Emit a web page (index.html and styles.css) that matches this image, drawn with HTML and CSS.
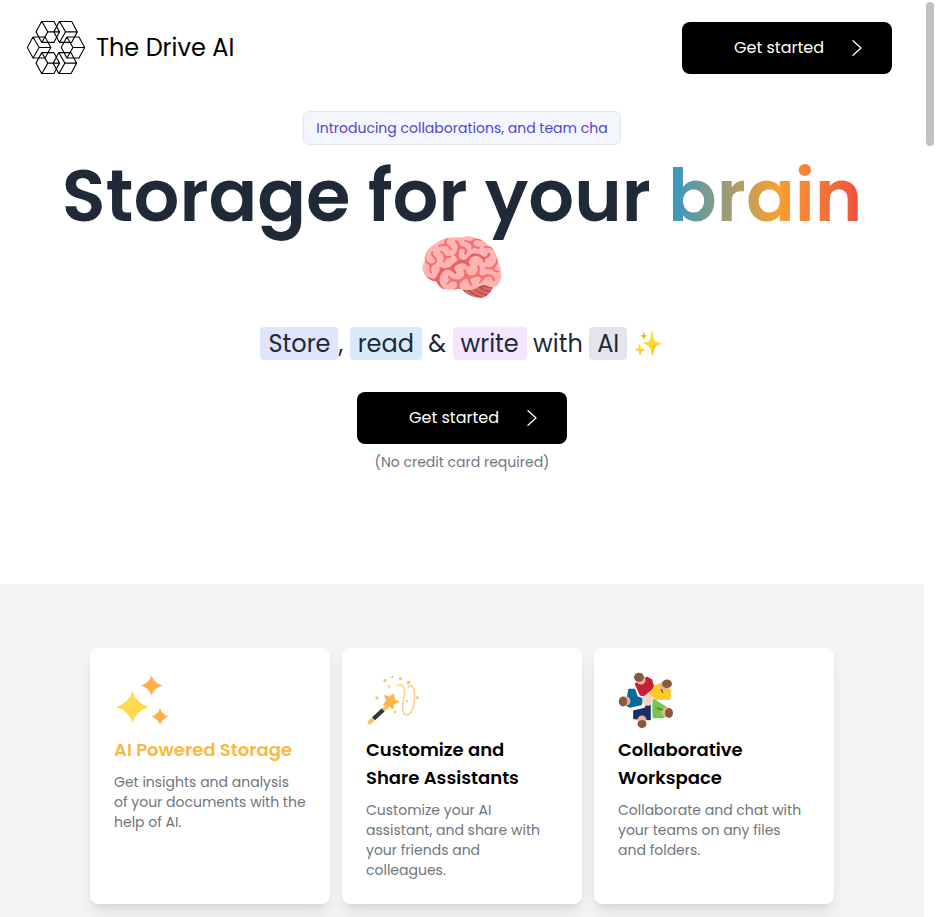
FILE: index.html
```
<!DOCTYPE html>
<html lang="en">
<head>
<meta charset="utf-8">
<title>The Drive AI</title>
<link rel="stylesheet" href="styles.css">
</head>
<body>
<div class="page">
  <header class="header">
    <a class="brand">
      <svg class="logo" width="58" height="53" viewBox="21 19 173 156" preserveAspectRatio="none" fill="none" stroke="#000" stroke-width="3.2" stroke-linejoin="round">
        <defs>
          <path id="cube" d="M-35 0 -18-31H18L35 0 18 31H-18ZM-18-31 0 0H35M0 0-18 31"/>
        </defs>
        <use href="#cube" x="83" y="51"/>
        <use href="#cube" x="136" y="51"/>
        <use href="#cube" x="57" y="97"/>
        <use href="#cube" x="158" y="97"/>
        <use href="#cube" x="83" y="143"/>
        <use href="#cube" x="134" y="143"/>
      </svg>
      <span class="brand-name">The Drive AI</span>
    </a>
    <a class="button">
      <span>Get started</span>
      <svg class="chevron" width="10" height="16" viewBox="0 0 10 16" fill="none" stroke="#fff" stroke-width="1.3" stroke-linecap="round" stroke-linejoin="round"><path d="M1 .8 9 8 1 15.2"/></svg>
    </a>
  </header>

  <main class="hero">
    <div class="announcement">Introducing collaborations, and team cha</div>
    <h1 class="headline">Storage for your <span class="gradient">brain</span> <span class="brain">🧠</span></h1>
    <p class="tagline"><span class="chip indigo">Store</span>, <span class="chip blue">read</span> &amp; <span class="chip purple">write</span> with <span class="chip gray">AI</span> ✨</p>
    <a class="button">
      <span>Get started</span>
      <svg class="chevron" width="10" height="16" viewBox="0 0 10 16" fill="none" stroke="#fff" stroke-width="1.3" stroke-linecap="round" stroke-linejoin="round"><path d="M1 .8 9 8 1 15.2"/></svg>
    </a>
    <p class="note">(No credit card required)</p>
  </main>

  <section class="features">
    <article class="card">
      <svg class="icon" width="56" height="56" viewBox="0 0 56 56">
        <path fill="#ffda50" d="M18.500 19Q22 31 34.500 35Q22 39 18.500 51Q15 39 2 35Q15 31 18.500 19Z"/>
        <path fill="#ffb04a" d="M37.500 3.500Q40 11 48.500 13.500Q40 16 37.500 23.500Q35 16 27 13.500Q35 11 37.500 3.500ZM46 36Q48 42.500 54.500 44.500Q48 46.500 46 53Q44 46.500 37.500 44.500Q44 42.500 46 36Z"/>
      </svg>
      <h2 class="card-title highlight">AI Powered Storage</h2>
      <p class="card-text">Get insights and analysis of your documents with the help of AI.</p>
    </article>
    <article class="card">
      <svg class="icon" width="56" height="56" viewBox="0 0 56 56">
        <path d="M3.500 50.500 26 30" stroke="#fbc25f" stroke-width="4" stroke-linecap="round"/>
        <path d="M7.500 46.800 17 38" stroke="#333639" stroke-width="4.200"/>
        <path fill="#f9b54a" stroke="#f9b54a" stroke-linejoin="round" d="M27.500 22 28.500 27.500 33 30 28 31.800 26.500 37 23 33 17.500 33 20.500 28.500 18.500 23.500 23.500 25Z"/>
        <path fill="none" stroke="#fcd38c" stroke-width="1.600" stroke-linecap="round" d="M31 14C36 10 39 15 38.500 23C36 33 35 43 41 43C47 42 50 27 48 18C47 13 43 12 42 16"/>
        <g fill="#fbc979"><circle cx="19" cy="8.500" r="1.700"/><circle cx="26.500" cy="5" r="1.300"/><circle cx="34.500" cy="6.500" r="1.700"/><circle cx="42.500" cy="10.500" r="1.900"/><circle cx="23" cy="14.500" r="1.200"/><circle cx="11" cy="26" r="1.800"/><circle cx="41" cy="29" r="1.300"/><circle cx="51.500" cy="25.500" r="1.500"/><circle cx="29" cy="40" r="1.400"/></g>
      </svg>
      <h2 class="card-title">Customize and Share Assistants</h2>
      <p class="card-text">Customize your AI assistant, and share with your friends and colleagues.</p>
    </article>
    <article class="card">
      <svg class="icon" width="56" height="56" viewBox="0 0 56 56">
        <g stroke-width="1.600" stroke-linejoin="round">
          <path fill="#c91f37" stroke="#c91f37" d="M17.500 12 29 5.500 33.500 8 35.500 15.500 26 23.500 22.500 23Z"/>
          <path fill="#ffc928" stroke="#ffc928" d="M37 14 44 11.500 52.500 18.500 51.500 27 39 27.300 32 22Z"/>
          <path fill="#76c552" stroke="#76c552" d="M35.500 27.500 48 35.500 51 41 45 45.500 35.500 45.500 35 37Z"/>
          <path fill="#182f66" stroke="#182f66" d="M16 39 27 36.500 29 33 32 33.500 32 47.500 16 46.500Z"/>
          <path fill="#086b99" stroke="#086b99" d="M11 17.500 16.500 17.500 19 25 24.500 27 23 32.500 12 35 8.500 33Z"/>
        </g>
        <path fill="#f6d5c5" d="m25 25 4-3 5 3 1 4-4 5-5-1-2-5Z"/>
        <g fill="#e4b39a"><circle cx="23" cy="8" r="4.500"/><circle cx="46.500" cy="14" r="4.500"/><circle cx="48" cy="40" r="4.500"/><circle cx="24" cy="48" r="4.500"/><circle cx="8" cy="29" r="4.500"/></g>
        <g fill="#8b5a3c"><ellipse cx="21" cy="5.200" rx="5" ry="4.500"/><ellipse cx="49" cy="11.800" rx="5" ry="4.300"/><ellipse cx="51" cy="41" rx="4" ry="5"/><ellipse cx="24" cy="52" rx="4.500" ry="4"/><ellipse cx="5" cy="29.500" rx="4.200" ry="5"/></g>
        <path fill="none" stroke="#6b5520" stroke-width="1.200" d="m43 17 2 4M39 36l6 2"/>
      </svg>
      <h2 class="card-title">Collaborative Workspace</h2>
      <p class="card-text">Collaborate and chat with your teams on any files and folders.</p>
    </article>
  </section>
</div>
<div class="scrollbar"><div class="thumb"></div></div>
</body>
</html>
```
FILE: styles.css
```
* { box-sizing: border-box; }

body {
  display: flex;
  height: 917px;
  margin: 0;
  overflow: hidden;
  background: #fff;
  color: #000;
  font-family: Poppins, Inter, "Noto Color Emoji", sans-serif;
  font-size: 16px;
  line-height: 24px;
}

h1, h2, p { margin: 0; }

.page { width: 924px; flex: none; }

.scrollbar { flex: 1; padding: 2px 2px 0; }
.thumb { width: 8px; height: 144px; border-radius: 4px; background: #c1c1c1; }

.header {
  display: flex;
  align-items: center;
  justify-content: space-between;
  height: 95px;
  padding: 0 32px 0 27px;
}

.brand { display: flex; align-items: center; gap: 11px; }
.logo { display: block; }
.brand-name { font-size: 24px; line-height: 32px; }

.button {
  display: flex;
  align-items: center;
  justify-content: flex-end;
  gap: 27.5px;
  width: 210px;
  height: 52px;
  padding-right: 30.5px;
  border-radius: 8px;
  background: #000;
  color: #fff;
}

.hero {
  display: flex;
  flex-direction: column;
  align-items: center;
  height: 489px;
  padding-top: 16px;
  text-align: center;
}

.announcement {
  padding: 6px 12px;
  border: 1px solid #e3e7ef;
  border-radius: 6px;
  background: #f3f6fd;
  color: #5145cd;
  font-size: 14px;
  line-height: 20px;
}

.headline {
  width: 860px;
  margin-top: 15px;
  color: #1f2937;
  font-size: 72px;
  font-weight: 600;
  line-height: 72px;
}

.gradient {
  background: linear-gradient(90deg, #2f98c8, #f9a030 56%, #ef4f40);
  -webkit-background-clip: text;
  background-clip: text;
  color: transparent;
}

.tagline {
  margin-top: 24px;
  color: #1f2937;
  font-size: 24px;
  line-height: 32px;
}

.chip { padding: 0 8px; border-radius: 4px; }
.indigo { background: #e0e4fd; }
.blue { background: #dbe9fd; }
.purple { background: #f3e6fd; }
.gray { background: #e2e6eb; }

.hero .button { margin-top: 32px; }

.note { margin-top: 8px; color: #70757f; font-size: 14px; line-height: 20px; }

.features {
  display: grid;
  grid-template-columns: repeat(3, 240px);
  gap: 12px;
  justify-content: center;
  height: 333px;
  padding-top: 64px;
  align-items: start;
  background: #f3f4f6;
}

.card {
  height: 256px;
  padding: 24px;
  border-radius: 8px;
  background: #fff;
  box-shadow: 0 10px 15px -3px rgb(0 0 0 / 0.1), 0 4px 6px -4px rgb(0 0 0 / 0.1);
}

.icon { display: block; }
.card-title { margin-top: 8px; font-size: 18px; font-weight: 600; line-height: 28px; }
.highlight { color: #fbb83f; }
.card-text { margin-top: 8px; color: #70757d; font-size: 14px; line-height: 20px; }
```
